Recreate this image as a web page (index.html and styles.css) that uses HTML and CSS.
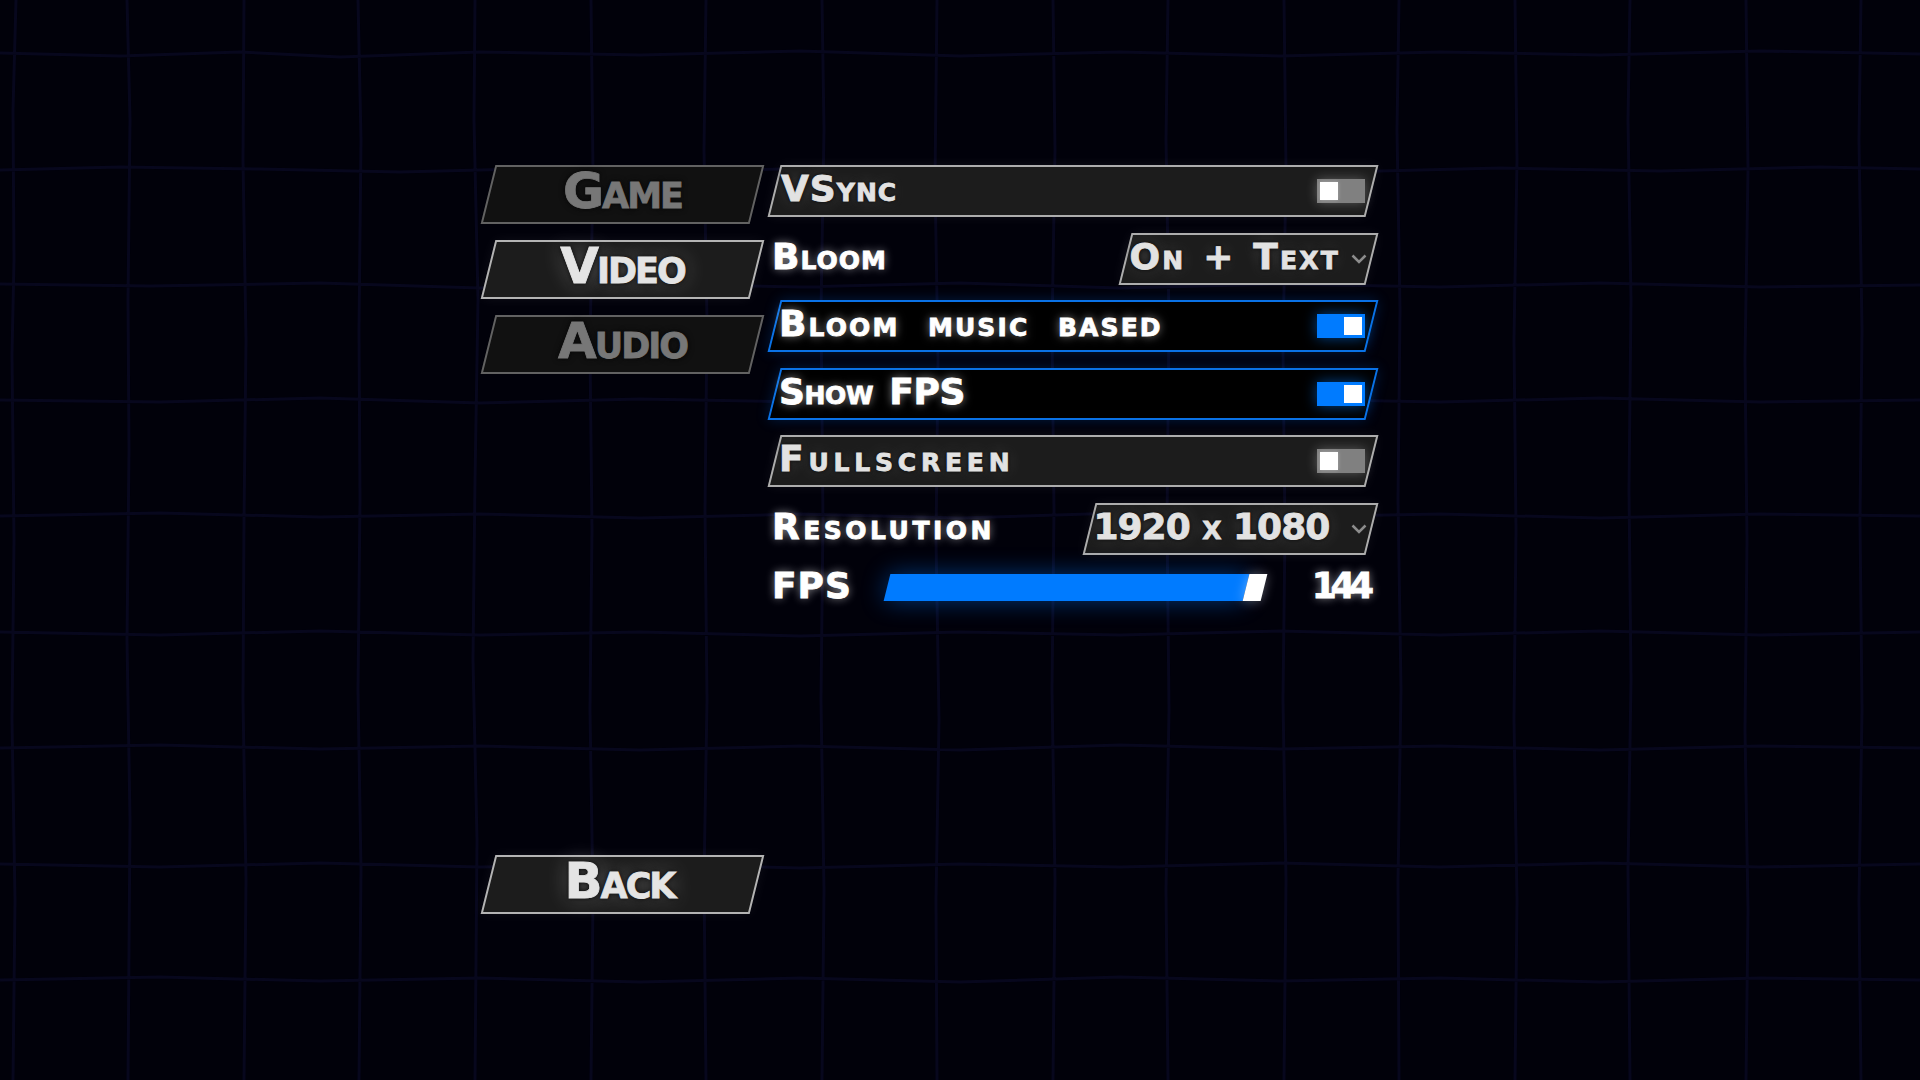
FILE: index.html
```html
<!DOCTYPE html>
<html lang="en">
<head>
<meta charset="utf-8">
<title>Settings</title>
<link rel="stylesheet" href="styles.css">
</head>
<body>
<svg class="grid" width="1920" height="1080" viewBox="0 0 1920 1080" aria-hidden="true">
  <path d="M16 0 13 110 14 260 12 355 14 540 12 720 15 900 13 1080
           M127 0 130 120 128 300 129 450 127 640 130 820 128 1080
           M244 0 243 160 246 340 244 520 243 700 246 880 244 1080
           M358 0 361 140 359 330 360 500 358 690 361 870 359 1080
           M475 0 474 120 478 300 475 480 473 660 477 840 475 1080
           M591 0 593 170 590 350 592 530 590 710 593 900 591 1080
           M706 0 704 150 707 320 705 510 707 700 704 880 706 1080
           M822 0 824 130 821 310 823 520 821 700 824 890 822 1080
           M937 0 935 180 938 360 936 540 939 720 936 900 937 1080
           M1053 0 1055 150 1052 330 1054 510 1052 690 1055 880 1053 1080
           M1168 0 1166 140 1169 320 1167 520 1169 710 1166 890 1168 1080
           M1284 0 1286 170 1283 350 1285 530 1283 700 1286 880 1284 1080
           M1399 0 1397 130 1400 310 1398 500 1401 690 1398 880 1399 1080
           M1515 0 1517 160 1514 340 1516 530 1514 720 1517 900 1515 1080
           M1630 0 1628 120 1631 300 1629 490 1631 680 1628 870 1630 1080
           M1746 0 1748 170 1745 360 1747 540 1745 730 1748 910 1746 1080
           M1861 0 1859 140 1862 330 1860 520 1862 710 1859 900 1861 1080
           M0 53 120 56 240 52 340 57 480 52 640 55 800 51 960 56 1120 52 1280 56 1440 52 1600 55 1760 51 1920 54
           M0 170 120 167 260 169 400 172 560 168 700 171 860 167 1020 171 1180 168 1340 172 1500 168 1660 171 1820 167 1920 169
           M0 284 150 286 320 283 480 288 640 284 800 287 960 283 1120 288 1280 284 1440 287 1600 283 1760 287 1920 285
           M0 400 160 402 320 398 480 403 640 399 800 402 960 398 1120 403 1280 399 1440 402 1600 398 1760 402 1920 400
           M0 516 160 513 320 517 480 514 640 518 800 514 960 518 1120 513 1280 517 1440 514 1600 518 1760 514 1920 516
           M0 632 160 635 320 631 480 635 640 632 800 636 960 632 1120 635 1280 631 1440 635 1600 631 1760 635 1920 632
           M0 748 160 745 320 749 480 746 640 750 800 746 960 750 1120 745 1280 749 1440 746 1600 750 1760 746 1920 748
           M0 864 160 867 320 863 480 867 640 864 800 868 960 864 1120 867 1280 863 1440 867 1600 863 1760 867 1920 864
           M0 980 160 977 320 981 480 978 640 982 800 978 960 982 1120 977 1280 981 1440 978 1600 982 1760 978 1920 980"/>
</svg>
<main class="menu">
  <nav class="tabs">
    <button class="tab dim"><span>Game</span></button>
    <button class="tab"><span>Video</span></button>
    <button class="tab dim"><span>Audio</span></button>
    <button class="tab back"><span>Back</span></button>
  </nav>
  <section class="rows">
    <div class="row panel"><span class="label">VSync</span><span class="toggle"><i></i></span></div>
    <div class="row plain"><span class="label">Bloom</span>
      <div class="select panel w-bloom"><span class="label sp-ontext">On + Text</span><svg class="chev" width="16" height="10" viewBox="0 0 16 10"><path d="M1.500 1.500 8 8l6.500-6.500"/></svg></div>
    </div>
    <div class="row panel on"><span class="label sp-music">Bloom music based</span><span class="toggle"><i></i></span></div>
    <div class="row panel on"><span class="label sp-show">Show FPS</span><span class="toggle"><i></i></span></div>
    <div class="row panel tight"><span class="label sp-full">Fullscreen</span><span class="toggle"><i></i></span></div>
    <div class="row plain"><span class="label sp-wide">Resolution</span>
      <div class="select panel w-res"><span class="label sp-res">1920 x 1080</span><svg class="chev" width="16" height="10" viewBox="0 0 16 10"><path d="M1.500 1.500 8 8l6.500-6.500"/></svg></div>
    </div>
    <div class="row plain slider-row"><span class="label fps">FPS</span>
      <div class="slider"><div class="fill"></div><div class="handle"></div></div>
      <span class="label value">144</span>
    </div>
  </section>
</main>
</body>
</html>
```
FILE: styles.css
```css
* { box-sizing: border-box; }
html, body { margin: 0; height: 100%; }
body {
  width: 1920px;
  height: 1080px;
  overflow: hidden;
  position: relative;
  background: #01010a;
  font-family: "DejaVu Sans", "Liberation Sans", sans-serif;
  font-weight: 700;
  font-variant: small-caps;
}
.grid { position: absolute; left: 0; top: 0; }
.grid path { fill: none; stroke: #07071d; stroke-width: 3px; }
.menu {
  position: relative;
  display: flex;
  gap: 16.500px;
  padding: 165px 0 0 488px;
  height: 914px;
}
.tabs { display: flex; flex-direction: column; gap: 16px; width: 269px; }
.tab {
  position: relative;
  height: 59px;
  padding: 0;
  border: 0;
  background: none;
  font: inherit;
  font-size: 50px;
  letter-spacing: -2px;
  line-height: 42px;
  color: #e4e4e4;
  -webkit-text-stroke: .8px currentColor;
  text-shadow: 0 0 3px #111, 0 0 6px #111, 0 0 22px rgba(255,255,255,.3);
}
.tab::before {
  content: "";
  position: absolute;
  inset: 0;
  transform: skewX(-14deg);
  border: 2px solid #b4b4b4;
  background: #1c1c1c;
  box-shadow: 0 0 14px rgba(255,255,255,.06);
}
.tab span { position: relative; display: block; height: 50px; }
.tab.dim { color: #777; text-shadow: 0 0 3px #0a0a0a, 0 0 6px #0a0a0a; }
.tab.dim::before { border-color: #626262; background: #111; box-shadow: none; }
.tab.back { margin-top: auto; }
.tab.back span { padding-right: 6px; }

.rows { display: flex; flex-direction: column; gap: 15.500px; width: 598px; }
.row {
  display: flex;
  align-items: center;
  justify-content: space-between;
  height: 52px;
  position: relative;
  flex: none;
}
.panel { position: relative; }
.panel::before {
  content: "";
  position: absolute;
  inset: 0;
  transform: skewX(-14deg);
  border: 2px solid #adadad;
  background: #1c1c1c;
  box-shadow: 0 0 14px rgba(255,255,255,.06);
}
.panel > * { position: relative; }
.row.panel { padding: 0 6.500px 0 7.500px; }
.row.on, .row.tight { padding-left: 5.500px; }
.label {
  font-size: 36px;
  line-height: 44px;
  height: 48px;
  letter-spacing: 1px;
  color: #e2e2e2;
  -webkit-text-stroke: .8px currentColor;
  text-shadow: 0 0 3px #0e0e0e, 0 0 6px #0e0e0e, 0 0 16px rgba(255,255,255,.2);
  white-space: nowrap;
}
.sp-wide { letter-spacing: 3.500px; }
.sp-full { letter-spacing: 4.800px; }
.sp-music { letter-spacing: 2.100px; word-spacing: 14px; }
.sp-show { letter-spacing: -.4px; word-spacing: 4px; }
.sp-ontext { letter-spacing: 2.200px; word-spacing: 3px; }
.sp-res { letter-spacing: -1px; word-spacing: 1px; }
.on.panel::before {
  border-color: #0a72e6;
  background: #000;
  box-shadow: 0 0 14px rgba(0,123,255,.22);
}
.on .label, .plain > .label {
  color: #fff;
  text-shadow: 0 0 10px rgba(255,255,255,.55);
}
.plain > .label { margin-left: -1.500px; }
.toggle {
  flex: none;
  display: flex;
  width: 48px;
  height: 24px;
  padding: 3px;
  background: #808080;
  box-shadow: 0 0 12px rgba(255,255,255,.28);
}
.toggle i { display: block; width: 18px; height: 18px; background: #fff; box-shadow: 0 0 4px rgba(255,255,255,.3); }
.on .toggle { background: #007bff; justify-content: flex-end; box-shadow: 0 0 14px rgba(0,123,255,.55); }
.on .toggle i { box-shadow: none; }

.select {
  display: flex;
  align-items: center;
  justify-content: space-between;
  height: 52px;
  padding: 0 5px 0 5px;
}
.w-bloom { width: 247px; }
.w-res { width: 283px; }
.chev { flex: none; }
.chev path { fill: none; stroke: #8c8c8c; stroke-width: 2.500px; }

.slider-row { height: 35px; justify-content: flex-start; }
.fps { width: 115px; flex: none; }
.slider {
  flex: none;
  display: flex;
  width: 377px;
  height: 27px;
  transform: skewX(-14deg);
}
.fill { flex: 1; background: #007bff; box-shadow: 0 0 24px rgba(0,123,255,.45); }
.handle { width: 18px; background: #fff; box-shadow: 0 0 12px rgba(255,255,255,.35); position: relative; }
.plain > .value { margin-left: auto; margin-right: 4px; letter-spacing: -6.500px; }
```
